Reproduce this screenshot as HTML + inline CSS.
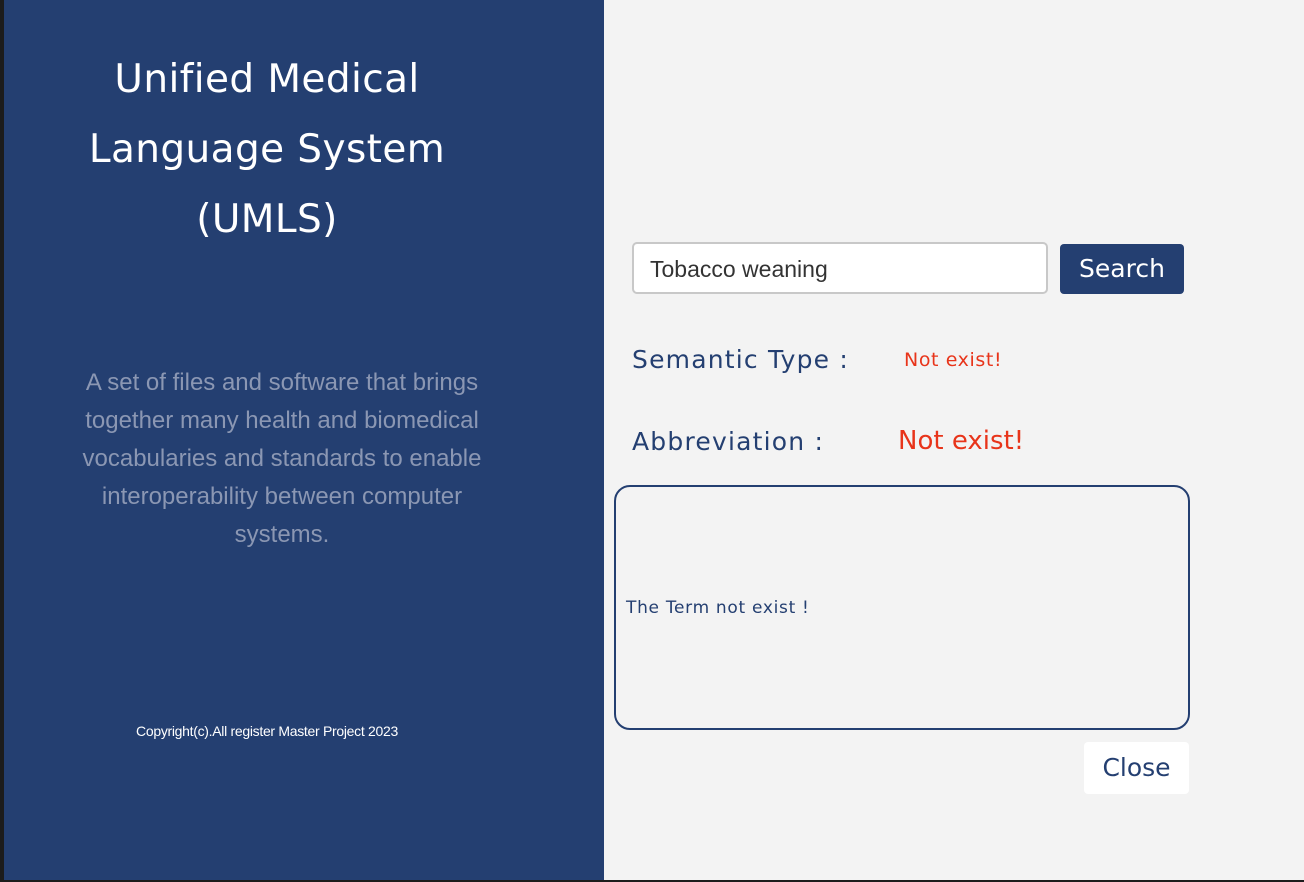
<!DOCTYPE html>
<html><head><style>
body{margin:0;width:1304px;height:882px;background:#1c1c1c;position:relative;overflow:hidden;font-family:"DejaVu Sans",sans-serif}
.l{position:absolute;left:4px;top:0;width:600px;height:880px;background:#243f71}
.r{position:absolute;left:604px;top:0;width:700px;height:880px;background:#f3f3f3}
.t{position:absolute;left:0;width:526px;text-align:center;color:#fff;font-size:39px;line-height:70px;top:45px;letter-spacing:0.4px}
.d{position:absolute;left:56px;width:444px;text-align:center;color:#8b97b3;font-family:"Liberation Sans",sans-serif;font-size:24px;line-height:38px;top:364px;letter-spacing:0}
.c{position:absolute;left:0;width:526px;text-align:center;color:#fff;font-family:"Liberation Sans",sans-serif;font-size:14px;top:723px;letter-spacing:-0.3px}
.a{position:absolute;white-space:nowrap}
</style></head><body>
<div class="l">
<div class="t">Unified Medical<br>Language System<br>(UMLS)</div>
<div class="d">A set of files and software that brings together many health and biomedical vocabularies and standards to enable interoperability between computer systems.</div>
<div class="c">Copyright(c).All register Master Project 2023</div>
</div>
<div class="r">
<div class="a" style="left:28px;top:242px;width:412px;height:48px;background:#fff;border:2px solid #c8c8c8;border-radius:5px"><span style="position:absolute;left:16px;top:12px;font-family:'Liberation Sans',sans-serif;font-size:23px;color:#333">Tobacco weaning</span></div>
<div class="a" style="left:456px;top:244px;width:124px;height:50px;background:#243f71;border-radius:4px;color:#fff;font-size:25px;text-align:center;line-height:50px">Search</div>
<div class="a" style="left:28px;top:345px;color:#243f71;font-size:25px;letter-spacing:1.2px">Semantic Type :</div>
<div class="a" style="left:300px;top:349px;color:#e8341a;font-size:19px;letter-spacing:0.6px">Not exist!</div>
<div class="a" style="left:28px;top:427px;color:#243f71;font-size:25px;letter-spacing:1.2px">Abbreviation :</div>
<div class="a" style="left:294px;top:426px;color:#e8341a;font-size:26px">Not exist!</div>
<div class="a" style="left:10px;top:485px;width:572px;height:241px;border:2px solid #243f71;border-radius:16px"></div>
<div class="a" style="left:22px;top:598px;color:#243f71;font-size:17px;letter-spacing:0.7px">The Term not exist !</div>
<div class="a" style="left:480px;top:742px;width:105px;height:52px;background:#fff;border-radius:4px;color:#243f71;font-size:25px;text-align:center;line-height:52px">Close</div>
</div>
</body></html>
